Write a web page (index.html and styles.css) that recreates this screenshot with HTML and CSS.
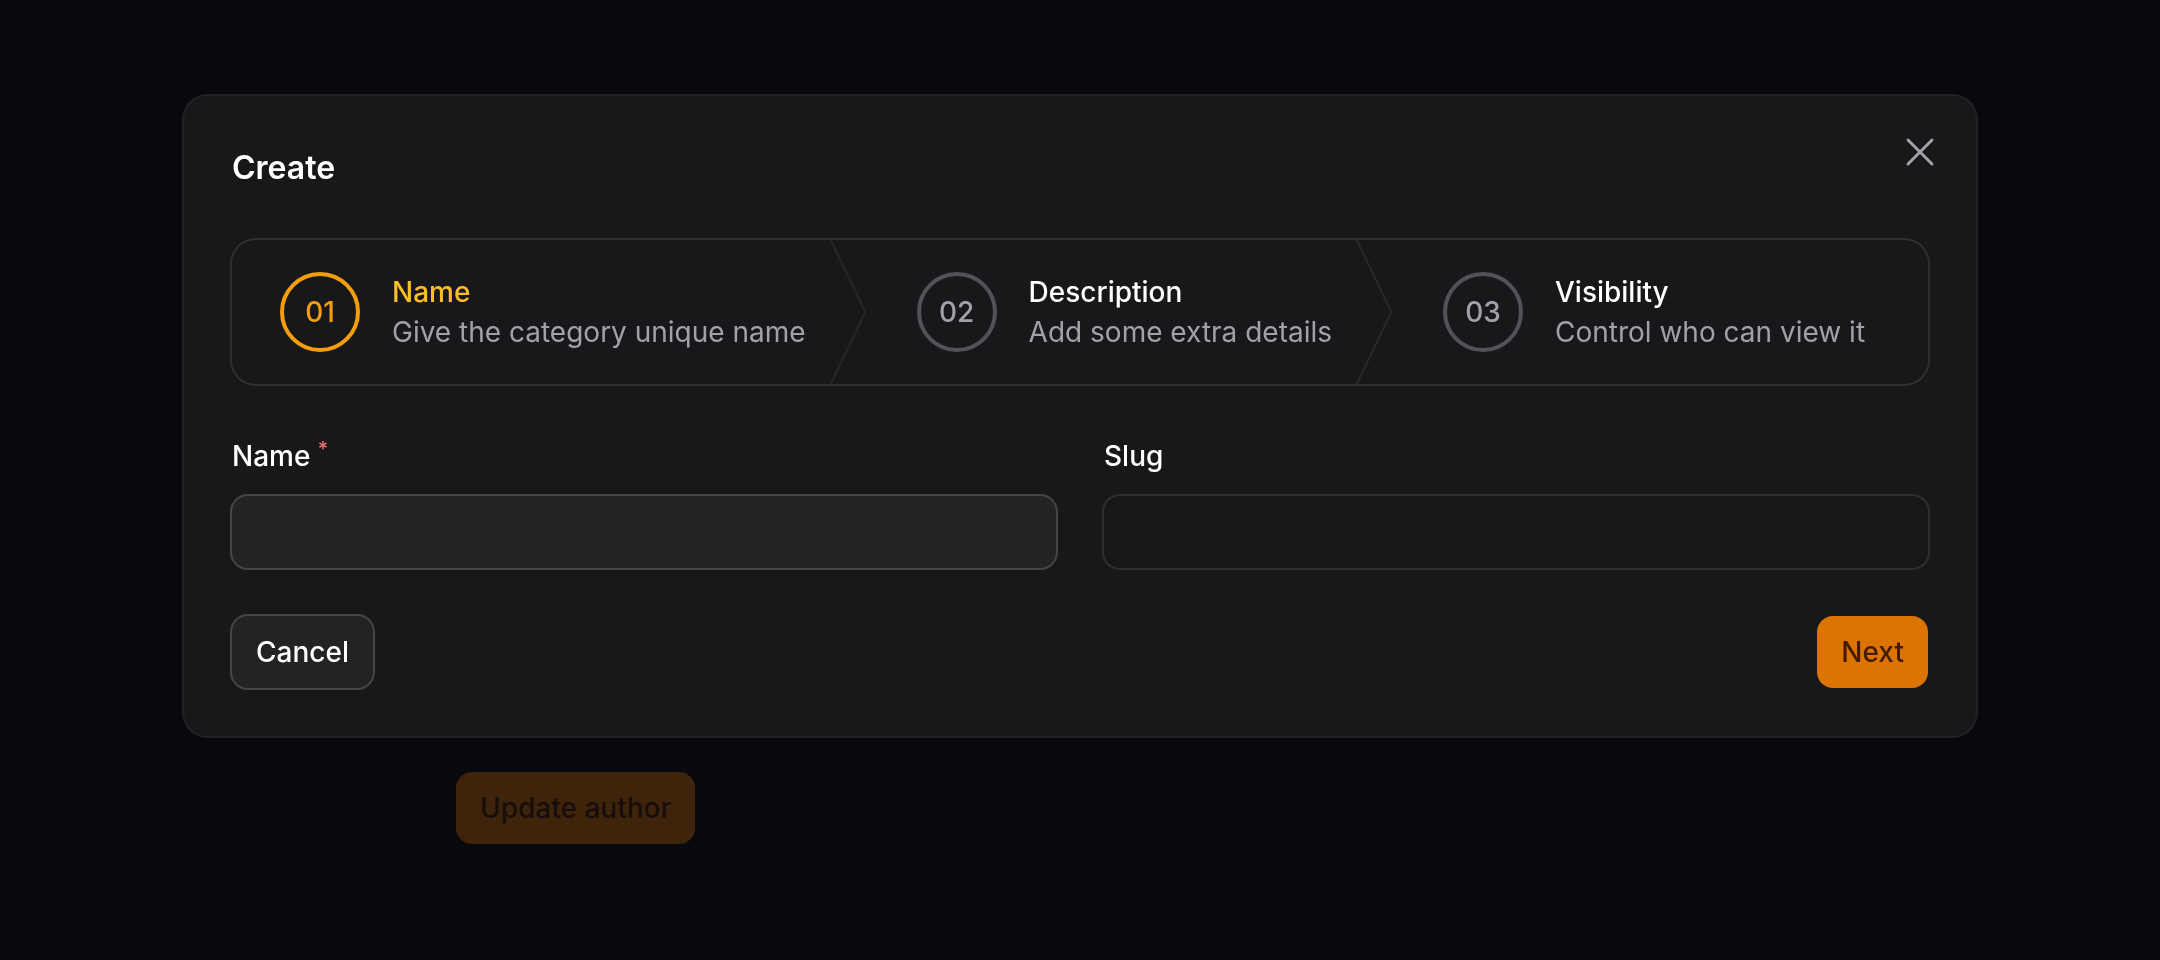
FILE: index.html
```html
<!DOCTYPE html>
<html lang="en">
<head>
<meta charset="utf-8">
<title>Create</title>
<link rel="stylesheet" href="styles.css">
</head>
<body>
  <main class="page">
    <button class="btn btn-primary" type="button">Update author</button>
  </main>

  <div class="overlay"></div>

  <div class="modal-layer">
    <section class="modal" role="dialog" aria-labelledby="modal-title">
      <button class="close" type="button" aria-label="Close">
        <svg viewBox="0 0 24 24" fill="none" stroke="currentColor" stroke-width="1.5" stroke-linecap="round" stroke-linejoin="round"><path d="M6 18 18 6M6 6l12 12"/></svg>
      </button>

      <h2 class="modal-title" id="modal-title">Create</h2>

      <ol class="wizard">
        <li class="step active">
          <div class="step-inner">
            <span class="step-num">01</span>
            <span class="step-text">
              <span class="step-title">Name</span>
              <span class="step-desc">Give the category unique name</span>
            </span>
          </div>
          <svg class="sep" viewBox="0 0 22 80" preserveAspectRatio="none" fill="none"><path d="M0 -2L20 40L0 82" stroke="currentColor" stroke-linejoin="round" vector-effect="non-scaling-stroke"/></svg>
        </li>
        <li class="step">
          <div class="step-inner">
            <span class="step-num">02</span>
            <span class="step-text">
              <span class="step-title">Description</span>
              <span class="step-desc">Add some extra details</span>
            </span>
          </div>
          <svg class="sep" viewBox="0 0 22 80" preserveAspectRatio="none" fill="none"><path d="M0 -2L20 40L0 82" stroke="currentColor" stroke-linejoin="round" vector-effect="non-scaling-stroke"/></svg>
        </li>
        <li class="step">
          <div class="step-inner">
            <span class="step-num">03</span>
            <span class="step-text">
              <span class="step-title">Visibility</span>
              <span class="step-desc">Control who can view it</span>
            </span>
          </div>
        </li>
      </ol>

      <div class="fields">
        <div class="field">
          <label class="label" for="name">Name <sup class="req">*</sup></label>
          <input class="input" id="name" type="text">
        </div>
        <div class="field">
          <label class="label" for="slug">Slug</label>
          <input class="input input-disabled" id="slug" type="text" disabled>
        </div>
      </div>

      <div class="actions">
        <button class="btn btn-gray" type="button">Cancel</button>
        <button class="btn btn-primary" type="button">Next</button>
      </div>
    </section>
  </div>
</body>
</html>
```
FILE: styles.css
```css
* {
  box-sizing: border-box;
  margin: 0;
  padding: 0;
}

html,
body {
  height: 100%;
}

body {
  background: #0a0a0d;
  color: #ffffff;
  font-family: Inter, "Noto Sans", sans-serif;
  overflow: hidden;
  -webkit-font-smoothing: antialiased;
}

.page {
  padding: 772px 0 0 456px;
}

.btn {
  display: inline-flex;
  align-items: center;
  justify-content: center;
  height: 72px;
  padding: 0 24px;
  border: 0;
  border-radius: 16px;
  font-family: Inter, "Noto Sans", sans-serif;
  font-size: 28px;
  font-weight: 500;
  line-height: 40px;
  cursor: pointer;
}

.btn-primary {
  background: #dc7403;
  color: #451a03;
}

.btn-gray {
  background: rgba(255, 255, 255, 0.05);
  color: #ffffff;
  box-shadow: 0 0 0 2px rgba(255, 255, 255, 0.2);
}

.overlay {
  position: fixed;
  inset: 0;
  background: rgba(10, 10, 13, 0.75);
}

.modal-layer {
  position: fixed;
  inset: 0;
  display: flex;
  justify-content: center;
  align-items: flex-start;
  padding-top: 96px;
}

.modal {
  position: relative;
  width: 1792px;
  padding: 48px;
  display: flex;
  flex-direction: column;
  gap: 48px;
  background: #18181b;
  border-radius: 24px;
  box-shadow: 0 0 0 2px rgba(255, 255, 255, 0.1);
}

.close {
  position: absolute;
  top: 32px;
  right: 32px;
  width: 48px;
  height: 48px;
  border: 0;
  background: none;
  color: #a1a1aa;
  display: flex;
}

.close svg {
  width: 48px;
  height: 48px;
}

.modal-title {
  font-size: 32px;
  font-weight: 600;
  line-height: 48px;
  color: #ffffff;
}

.wizard {
  list-style: none;
  display: grid;
  grid-auto-flow: column;
  border-radius: 24px;
  box-shadow: 0 0 0 2px rgba(255, 255, 255, 0.1);
}

.step {
  position: relative;
  display: flex;
}

.step-inner {
  display: flex;
  align-items: center;
  gap: 32px;
  height: 144px;
  padding: 32px 48px;
}

.step-num {
  flex-shrink: 0;
  width: 80px;
  height: 80px;
  border: 4px solid #52525b;
  border-radius: 50%;
  display: flex;
  align-items: center;
  justify-content: center;
  font-size: 28px;
  font-weight: 500;
  line-height: 40px;
  color: #a1a1aa;
}

.step-text {
  display: grid;
  justify-items: start;
  width: max-content;
  max-width: 480px;
}

.step-title {
  font-size: 28px;
  font-weight: 500;
  line-height: 40px;
  color: #ffffff;
}

.step-desc {
  font-size: 28px;
  font-weight: 400;
  line-height: 40px;
  color: #a1a1aa;
}

.active .step-num {
  border-color: #f59e0b;
  color: #f59e0b;
}

.active .step-title {
  color: #fbbf24;
}

.sep {
  position: absolute;
  top: 0;
  right: 0;
  width: 40px;
  height: 100%;
  color: rgba(255, 255, 255, 0.07);
  stroke-width: 2px;
}

.fields {
  display: grid;
  grid-template-columns: 1fr 1fr;
  gap: 48px;
}

.field {
  display: grid;
  gap: 16px;
}

.label {
  display: block;
  height: 48px;
  font-size: 28px;
  font-weight: 500;
  line-height: 48px;
  color: #ffffff;
}

.req {
  color: #f87171;
  font-size: 20px;
  font-weight: 500;
  line-height: 0;
  vertical-align: 10px;
}

.input {
  display: block;
  width: 100%;
  height: 72px;
  padding: 0 24px;
  border: 0;
  border-radius: 16px;
  outline: none;
  background: rgba(255, 255, 255, 0.05);
  box-shadow: 0 0 0 2px rgba(255, 255, 255, 0.2);
  color: #ffffff;
  font-family: Inter, "Noto Sans", sans-serif;
  font-size: 28px;
}

.input-disabled {
  background: transparent;
  box-shadow: 0 0 0 2px rgba(255, 255, 255, 0.1);
}

.actions {
  display: flex;
  justify-content: space-between;
  align-items: center;
}
```
